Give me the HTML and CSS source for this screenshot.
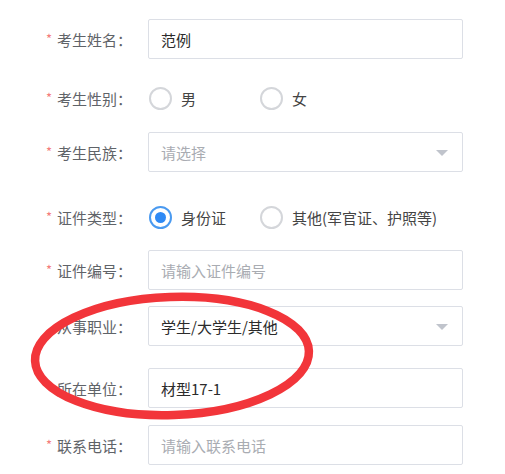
FILE: index.html
```html
<!DOCTYPE html>
<html lang="zh-CN">
<head>
<meta charset="utf-8">
<title>考生信息</title>
<link rel="stylesheet" href="styles.css">
</head>
<body>
<form class="form">
  <div class="row">
    <label class="label"><span class="req">*</span>考生姓名：</label>
    <div class="field"><div class="input">范例</div></div>
  </div>
  <div class="row r2">
    <label class="label"><span class="req">*</span>考生性别：</label>
    <div class="radios">
      <span class="option"><span class="radio"></span>男</span>
      <span class="option"><span class="radio"></span>女</span>
    </div>
  </div>
  <div class="row r3">
    <label class="label"><span class="req">*</span>考生民族：</label>
    <div class="field"><div class="input select placeholder">请选择<span class="caret"></span></div></div>
  </div>
  <div class="row r4">
    <label class="label"><span class="req">*</span>证件类型：</label>
    <div class="radios">
      <span class="option"><span class="radio checked"></span>身份证</span>
      <span class="option"><span class="radio"></span>其他(军官证、护照等)</span>
    </div>
  </div>
  <div class="row r5">
    <label class="label"><span class="req">*</span>证件编号：</label>
    <div class="field"><div class="input placeholder">请输入证件编号</div></div>
  </div>
  <div class="row r6">
    <label class="label">从事职业：</label>
    <div class="field"><div class="input select">学生/大学生/其他<span class="caret"></span></div></div>
  </div>
  <div class="row r7">
    <label class="label">所在单位：</label>
    <div class="field"><div class="input">材型17-1</div></div>
  </div>
  <div class="row r8">
    <label class="label"><span class="req">*</span>联系电话：</label>
    <div class="field"><div class="input placeholder">请输入联系电话</div></div>
  </div>
</form>
<svg class="mark" width="505" height="474" viewBox="0 0 505 474">
  <ellipse cx="172" cy="356" rx="137" ry="59" transform="rotate(-2 172 356)" fill="none" stroke="#f2353a" stroke-width="8.5"/>
</svg>
</body>
</html>
```
FILE: styles.css
```css
html, body {
  margin: 0;
  padding: 0;
  background: #ffffff;
}
body {
  position: relative;
  width: 505px;
  height: 474px;
  overflow: hidden;
  font-family: "Noto Sans CJK SC", "Liberation Sans", sans-serif;
  font-size: 15px;
}
.form {
  padding-top: 19px;
  display: flex;
  flex-direction: column;
}
.row {
  display: flex;
  align-items: center;
  height: 40px;
}
.r2 { margin-top: 19px; }
.r3 { margin-top: 14px; }
.r4 { margin-top: 25px; }
.r5 { margin-top: 13px; }
.r6 { margin-top: 16px; }
.r7 { margin-top: 22px; }
.r8 { margin-top: 17px; }
.label {
  width: 132px;
  flex: none;
  text-align: right;
  color: #5f6368;
  margin-right: 16px;
  white-space: nowrap;
}
.req {
  color: #f47c7c;
  margin-right: 5px;
  font-size: 13px;
  position: relative;
  top: -2px;
}
.field {
  width: 315px;
}
.input {
  box-sizing: border-box;
  height: 40px;
  border: 1px solid #dcdfe6;
  border-radius: 2px;
  padding-left: 12px;
  display: flex;
  align-items: center;
  color: #2b2b2b;
  position: relative;
}
.placeholder {
  color: #a9acb2;
}
.caret {
  position: absolute;
  right: 14px;
  top: 17px;
  width: 0;
  height: 0;
  border-left: 6px solid transparent;
  border-right: 6px solid transparent;
  border-top: 6px solid #c0c4cc;
}
.radios {
  display: flex;
  margin-left: 1px;
}
.option {
  display: inline-flex;
  align-items: center;
  width: 111px;
  color: #444;
  white-space: nowrap;
}
.radio {
  box-sizing: border-box;
  width: 23px;
  height: 23px;
  border: 2px solid #d4d6da;
  border-radius: 50%;
  margin-right: 9px;
  flex: none;
  display: flex;
  align-items: center;
  justify-content: center;
}
.radio.checked {
  border-color: #4a9af0;
}
.radio.checked::after {
  content: "";
  width: 11px;
  height: 11px;
  border-radius: 50%;
  background: #2f8af5;
}
.mark {
  position: absolute;
  left: 0;
  top: 0;
  pointer-events: none;
}
```
